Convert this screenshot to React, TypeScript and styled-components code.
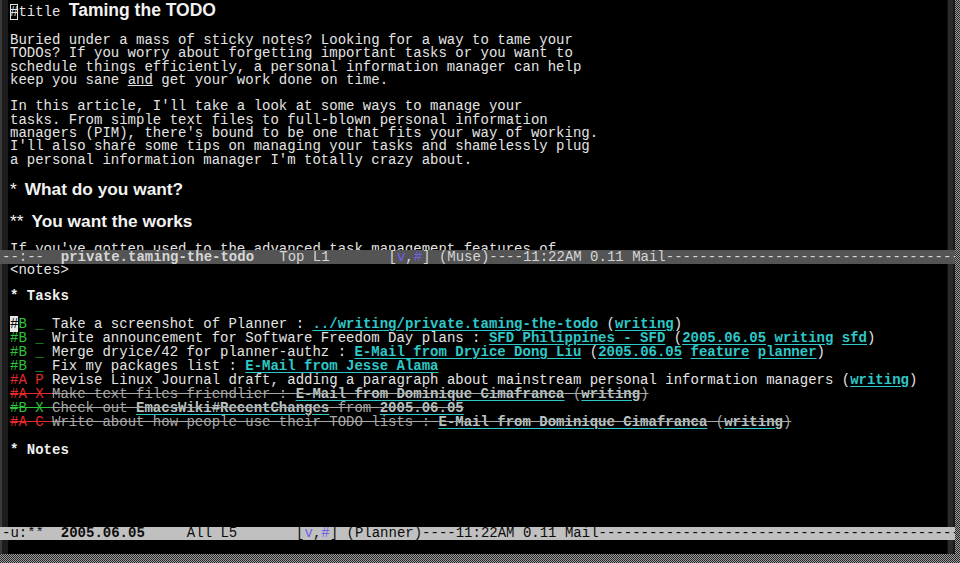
import React from "react";
import styled, { createGlobalStyle } from "styled-components";

const MONO = `"Liberation Mono", "DejaVu Sans Mono", monospace`;
const SANS = `"Liberation Sans", Arial, sans-serif`;

const GlobalStyle = createGlobalStyle`
  html, body {
    margin: 0;
    padding: 0;
    background: #000;
    overflow: hidden;
  }
`;

const Desktop = styled.div`
  width: 960px;
  height: 563px;
  overflow: hidden;
  background: repeating-conic-gradient(#9c9c9c 0 25%, #262626 0 50%) 0 0 / 2px 2px;
`;

const Frame = styled.div`
  width: 955px;
  height: 554px;
  background: #000;
  display: flex;
  flex-direction: column;
  font-family: ${MONO};
  font-size: 14px;
  color: #e4e4e4;
`;

const Window = styled.div<{ $h: number }>`
  height: ${(p) => p.$h}px;
  flex: none;
  display: grid;
  grid-template-columns: 8px 1fr 8px;
  overflow: hidden;
`;

const Fringe = styled.div`
  background: linear-gradient(to right, #3a3a3a 0 2px, #1c1c1c 2px);
`;

const ScrollBar = styled.div`
  background: linear-gradient(to right, #111 0 1px, #2a2a2a 1px 6px, #1a1a1a 6px);
`;

const TextArea = styled.div`
  padding-left: 2px;
  overflow: hidden;
  white-space: pre;
`;

const Line = styled.div<{ $h?: number }>`
  height: ${(p) => p.$h ?? 14}px;
  line-height: ${(p) => p.$h ?? 14}px;
  white-space: pre;
  overflow: visible;
`;

const HollowCursor = styled.span`
  box-shadow: inset 0 0 0 1px #e4e4e4;
`;

const BlockCursor = styled.span`
  background: #e8e8e8;
  color: #000;
`;

const Title = styled.span`
  font-family: ${SANS};
  font-weight: bold;
  font-size: 17.5px;
  color: #f2f2f2;
`;

const Heading = styled.span`
  font-family: ${SANS};
  font-weight: bold;
  font-size: 17.3px;
  color: #f2f2f2;
`;

const Stars = styled.span`
  font-weight: normal;
  padding-right: 8px;
`;

const Under = styled.span`
  text-decoration: underline;
`;

const Outline = styled.span`
  font-weight: bold;
  color: #f0f0f0;
`;

const Marker = styled.span<{ $pri: "A" | "B"; $done?: boolean }>`
  color: ${(p) => (p.$pri === "A" ? "#e42a2a" : "#2ec43a")};
  text-decoration: ${(p) => (p.$done ? "line-through" : "none")};
`;

const Plain = styled.span<{ $done?: boolean }>`
  color: ${(p) => (p.$done ? "#a8a8a8" : "#e4e4e4")};
  text-decoration: ${(p) => (p.$done ? "line-through" : "none")};
`;

const Link = styled.span<{ $done?: boolean }>`
  font-weight: bold;
  color: ${(p) => (p.$done ? "#b8c4c4" : "#2ec8c8")};
  text-decoration: underline;
  text-decoration-color: #2ec8c8;
  text-underline-offset: 2px;
`;

const Struck = styled.span`
  text-decoration: line-through;
  text-decoration-color: #a8a8a8;
`;

const ModeLine = styled.div<{ $active?: boolean; $h: number }>`
  flex: none;
  height: ${(p) => p.$h}px;
  line-height: ${(p) => p.$h}px;
  padding-left: 2px;
  white-space: pre;
  overflow: hidden;
  background: ${(p) => (p.$active ? "#c0c0c0" : "#545454")};
  color: ${(p) => (p.$active ? "#0c0c0c" : "#d6d6d6")};
`;

const BufferId = styled.span`
  font-weight: bold;
`;

const Flag = styled.span`
  color: #6e62e8;
`;

type Seg = string | { link: string };

interface Task {
  pri: "A" | "B";
  status: string;
  done?: boolean;
  cursor?: boolean;
  parts: Seg[];
}

const tasks: Task[] = [
  {
    pri: "B",
    status: "_",
    cursor: true,
    parts: ["Take a screenshot of Planner : ", { link: "../writing/private.taming-the-todo" }, " (", { link: "writing" }, ")"],
  },
  {
    pri: "B",
    status: "_",
    parts: [
      "Write announcement for Software Freedom Day plans : ",
      { link: "SFD Philippines - SFD" },
      " (",
      { link: "2005.06.05" },
      " ",
      { link: "writing" },
      " ",
      { link: "sfd" },
      ")",
    ],
  },
  {
    pri: "B",
    status: "_",
    parts: [
      "Merge dryice/42 for planner-authz : ",
      { link: "E-Mail from Dryice Dong Liu" },
      " (",
      { link: "2005.06.05" },
      " ",
      { link: "feature" },
      " ",
      { link: "planner" },
      ")",
    ],
  },
  { pri: "B", status: "_", parts: ["Fix my packages list : ", { link: "E-Mail from Jesse Alama" }] },
  {
    pri: "A",
    status: "P",
    parts: [
      "Revise Linux Journal draft, adding a paragraph about mainstream personal information managers (",
      { link: "writing" },
      ")",
    ],
  },
  {
    pri: "A",
    status: "X",
    done: true,
    parts: ["Make text files friendlier : ", { link: "E-Mail from Dominique Cimafranca" }, " (", { link: "writing" }, ")"],
  },
  {
    pri: "B",
    status: "X",
    done: true,
    parts: ["Check out ", { link: "EmacsWiki#RecentChanges" }, " from ", { link: "2005.06.05" }],
  },
  {
    pri: "A",
    status: "C",
    done: true,
    parts: [
      "Write about how people use their TODO lists : ",
      { link: "E-Mail from Dominique Cimafranca" },
      " (",
      { link: "writing" },
      ")",
    ],
  },
];

const para1 = [
  "Buried under a mass of sticky notes? Looking for a way to tame your",
  "TODOs? If you worry about forgetting important tasks or you want to",
  "schedule things efficiently, a personal information manager can help",
];

const para2 = [
  "In this article, I'll take a look at some ways to manage your",
  "tasks. From simple text files to full-blown personal information",
  "managers (PIM), there's bound to be one that fits your way of working.",
  "I'll also share some tips on managing your tasks and shamelessly plug",
  "a personal information manager I'm totally crazy about.",
];

const TL = 13.3;

const TaskLine = ({ task }: { task: Task }) => (
  <Line>
    <Marker $pri={task.pri} $done={task.done}>
      {task.cursor ? <BlockCursor>#</BlockCursor> : "#"}
      {`${task.pri} ${task.status} `}
    </Marker>
    {task.parts.map((seg, i) =>
      typeof seg === "string" ? (
        <Plain key={i} $done={task.done}>
          {seg}
        </Plain>
      ) : (
        <Link key={i} $done={task.done}>
          {task.done ? <Struck>{seg.link}</Struck> : seg.link}
        </Link>
      )
    )}
  </Line>
);

const dashes = "-".repeat(140);

export default function App() {
  return (
    <Desktop>
      <GlobalStyle />
      <Frame>
        <Window $h={250}>
          <Fringe />
          <TextArea>
            <Line $h={20.7}>
              <HollowCursor>#</HollowCursor>title <Title>Taming the TODO</Title>
            </Line>
            <Line $h={TL} />
            {para1.map((t) => (
              <Line $h={TL} key={t}>
                {t}
              </Line>
            ))}
            <Line $h={TL}>
              keep you sane <Under>and</Under> get your work done on time.
            </Line>
            <Line $h={TL} />
            {para2.map((t) => (
              <Line $h={TL} key={t}>
                {t}
              </Line>
            ))}
            <Line $h={TL} />
            <Line $h={18}>
              <Heading>
                <Stars>*</Stars>What do you want?
              </Heading>
            </Line>
            <Line $h={TL} />
            <Line $h={18}>
              <Heading>
                <Stars>**</Stars>You want the works
              </Heading>
            </Line>
            <Line $h={TL} />
            <Line $h={TL}>If you've gotten used to the advanced task management features of</Line>
          </TextArea>
          <ScrollBar />
        </Window>
        <ModeLine $h={14}>
          {"--:--  "}
          <BufferId>private.taming-the-todo</BufferId>
          {"   Top L1       ["}
          <Flag>v</Flag>,<Flag>#</Flag>
          {"] (Muse)----11:22AM 0.11 Mail" + dashes}
        </ModeLine>
        <Window $h={263}>
          <Fringe />
          <TextArea>
            <Line $h={13.2}>{"<notes>"}</Line>
            <Line $h={13.2} />
            <Line $h={13.2}>
              <Outline>* Tasks</Outline>
            </Line>
            <Line $h={13.2} />
            {tasks.map((t, i) => (
              <TaskLine task={t} key={i} />
            ))}
            <Line />
            <Line>
              <Outline>* Notes</Outline>
            </Line>
          </TextArea>
          <ScrollBar />
        </Window>
        <ModeLine $h={13} $active>
          {"-u:**  "}
          <BufferId>2005.06.05</BufferId>
          {"     All L5       ["}
          <Flag>v</Flag>,<Flag>#</Flag>
          {"] (Planner)----11:22AM 0.11 Mail" + dashes}
        </ModeLine>
        <Window $h={14}>
          <Fringe />
          <TextArea />
          <ScrollBar />
        </Window>
      </Frame>
    </Desktop>
  );
}
